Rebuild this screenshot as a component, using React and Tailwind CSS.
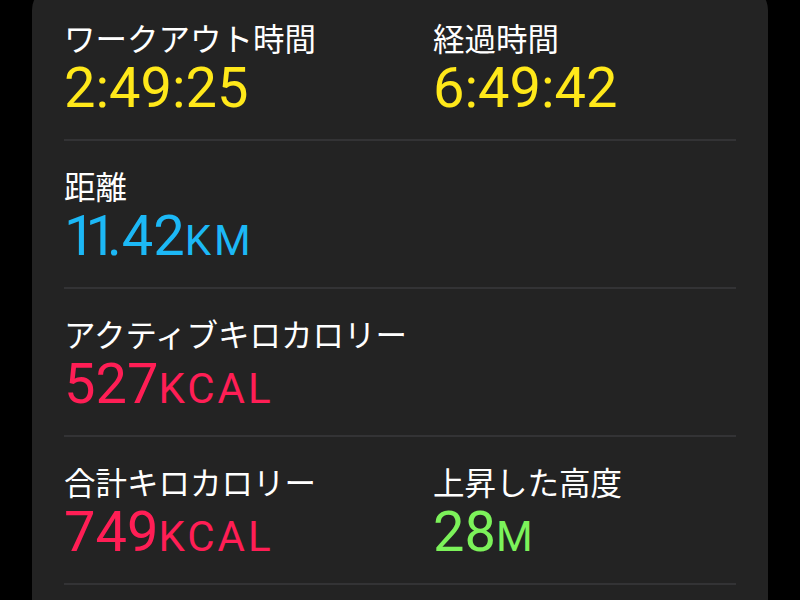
const rows = [
  [
    { label: "ワークアウト時間", value: "2:49:25", unit: "", color: "text-[#ffe81a]" },
    { label: "経過時間", value: "6:49:42", unit: "", color: "text-[#ffe81a]" },
  ],
  [{ label: "距離", value: "11.42", unit: "KM", color: "text-[#1cb8f6]" }],
  [{ label: "アクティブキロカロリー", value: "527", unit: "KCAL", color: "text-[#ff1e55]" }],
  [
    { label: "合計キロカロリー", value: "749", unit: "KCAL", color: "text-[#ff1e55]" },
    { label: "上昇した高度", value: "28", unit: "M", color: "text-[#7cf25a]" },
  ],
];

// the watch font has a narrow "1", so squeeze it a little
const Digits = ({ text }) =>
  text.split("").map((ch, i) =>
    ch === "1" ? (
      <span key={i} className="tracking-[-10px]">
        1
      </span>
    ) : (
      <span key={i}>{ch}</span>
    )
  );

const Metric = ({ label, value, unit, color }) => (
  <div className="flex flex-col">
    <div className="text-[31.5px] leading-[31px] text-white font-['Noto_Sans_CJK_JP',sans-serif]">
      {label}
    </div>
    <div className={`mt-2 text-[56px] leading-[55px] font-['Roboto',sans-serif] ${color}`}>
      <Digits text={value} />
      {unit && <span className="text-[42px] leading-none tracking-[3px]">{unit}</span>}
    </div>
  </div>
);

export default function App() {
  return (
    <div className="min-h-[600px] bg-black overflow-hidden">
      <div className="mx-8 -mt-[14px] rounded-[24px] bg-[#232323] px-8 pt-[36px]">
        {rows.map((row, i) => (
          <div
            key={i}
            className={`grid grid-cols-[369px_1fr] border-b-2 border-[#333335] pb-[23px] ${i > 0 ? "pt-[29px]" : ""}`}
          >
            {row.map((m) => (
              <Metric key={m.label} {...m} />
            ))}
          </div>
        ))}
        <div className="h-10" />
      </div>
    </div>
  );
}
